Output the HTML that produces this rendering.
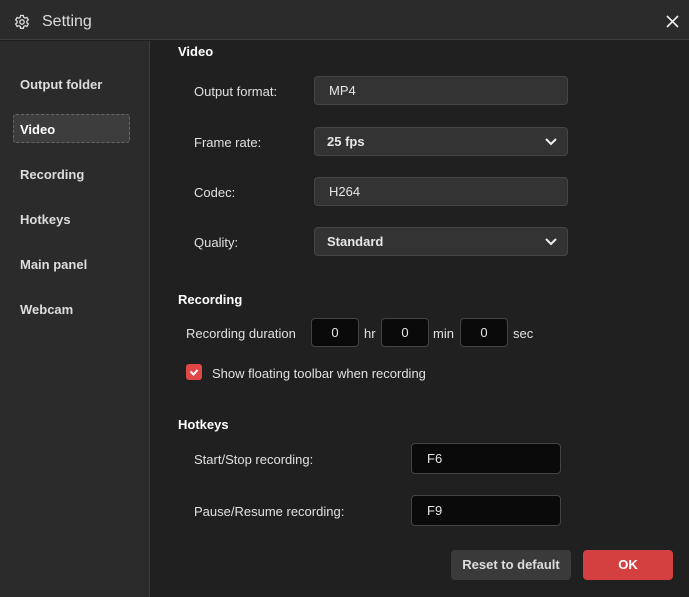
<!DOCTYPE html><html><head><style>
*{margin:0;padding:0;box-sizing:border-box}
body{width:689px;height:597px;background:#202020;font-family:"Liberation Sans",sans-serif;color:#e6e6e6;position:relative;overflow:hidden;font-size:13px}
.a{position:absolute}
.title{left:0;top:0;width:689px;height:40px;background:#2b2b2b;border-bottom:1px solid #3c3c3c}
.side{left:0;top:41px;width:150px;height:556px;background:#2b2b2b;border-right:1px solid #3c3c3c}
.nav{left:20px;font-weight:bold;font-size:13px;color:#ddd}
.h{font-weight:bold;font-size:13px;color:#fff}
.lab{font-size:13px;color:#e0e0e0}
.inp{left:314px;width:254px;height:29px;background:#333;border:1px solid #454545;border-radius:4px;padding-left:14px;line-height:27px;font-size:13px}
.sel{font-weight:bold;padding-left:12px}
.chev{position:absolute;right:10px;top:9px}
.num{height:29px;background:#0a0a0b;border:1px solid #444;border-radius:4px;text-align:center;line-height:27px;top:318px}
.hk{left:411px;width:150px;height:31px;background:#0a0a0b;border:1px solid #444;border-radius:4px;padding-left:15px;line-height:29px}
</style></head><body>
<div class="a" style="left:0;top:0;width:689px;height:2px;background:#111"></div>
<div class="a title">
<svg class="a" style="left:14px;top:14px" width="16" height="16" viewBox="0 0 16 16" fill="none" stroke="#ddd" stroke-width="1.3"><path d="M6.6 1.5h2.8l.4 1.9 1.3.7 1.8-.7 1.4 2.4-1.4 1.3v1.6l1.4 1.3-1.4 2.4-1.8-.7-1.3.7-.4 1.9H6.6l-.4-1.9-1.3-.7-1.8.7-1.4-2.4 1.4-1.3V7.2L1.7 5.9l1.4-2.4 1.8.7 1.3-.7z"/><circle cx="8" cy="8" r="2.2"/></svg>
<div class="a" style="left:42px;top:13px;font-size:16px;color:#ddd">Setting</div>
<svg class="a" style="left:666px;top:15px" width="13" height="13" viewBox="0 0 13 13" stroke="#eee" stroke-width="1.6"><path d="M1 1l11 11M12 1L1 12"/></svg>
</div>
<div class="a side"></div>
<div class="a nav" style="top:77px">Output folder</div>
<div class="a" style="left:13px;top:114px;width:117px;height:29px;background:#3d3d3d;border:1px dashed #666;border-radius:3px"></div>
<div class="a nav" style="top:122px;color:#fff">Video</div>
<div class="a nav" style="top:167px">Recording</div>
<div class="a nav" style="top:212px">Hotkeys</div>
<div class="a nav" style="top:257px">Main panel</div>
<div class="a nav" style="top:302px">Webcam</div>

<div class="a h" style="left:178px;top:44px">Video</div>
<div class="a lab" style="left:194px;top:84px">Output format:</div>
<div class="a inp" style="top:76px">MP4</div>
<div class="a lab" style="left:194px;top:135px">Frame rate:</div>
<div class="a inp sel" style="top:127px">25 fps<svg class="chev" width="12" height="9" viewBox="0 0 12 9" fill="none" stroke="#eee" stroke-width="2"><path d="M1 2l5 5 5-5"/></svg></div>
<div class="a lab" style="left:194px;top:185px">Codec:</div>
<div class="a inp" style="top:177px">H264</div>
<div class="a lab" style="left:194px;top:235px">Quality:</div>
<div class="a inp sel" style="top:227px">Standard<svg class="chev" width="12" height="9" viewBox="0 0 12 9" fill="none" stroke="#eee" stroke-width="2"><path d="M1 2l5 5 5-5"/></svg></div>

<div class="a h" style="left:178px;top:292px">Recording</div>
<div class="a lab" style="left:186px;top:326px">Recording duration</div>
<div class="a num" style="left:311px;width:48px">0</div>
<div class="a lab" style="left:364px;top:326px">hr</div>
<div class="a num" style="left:381px;width:48px">0</div>
<div class="a lab" style="left:433px;top:326px">min</div>
<div class="a num" style="left:460px;width:48px">0</div>
<div class="a lab" style="left:513px;top:326px">sec</div>
<div class="a" style="left:186px;top:364px;width:16px;height:16px;background:#e04848;border-radius:3px"><svg width="16" height="16" viewBox="0 0 16 16" fill="none" stroke="#fff" stroke-width="2"><path d="M4.5 7.5l3 3 4-4.5"/></svg></div>
<div class="a lab" style="left:212px;top:366px">Show floating toolbar when recording</div>

<div class="a h" style="left:178px;top:417px">Hotkeys</div>
<div class="a lab" style="left:194px;top:452px">Start/Stop recording:</div>
<div class="a hk" style="top:443px">F6</div>
<div class="a lab" style="left:194px;top:504px">Pause/Resume recording:</div>
<div class="a hk" style="top:495px">F9</div>

<div class="a" style="left:451px;top:550px;width:120px;height:30px;background:#3a3a3a;border-radius:4px;text-align:center;line-height:30px;font-weight:bold;color:#ddd">Reset to default</div>
<div class="a" style="left:583px;top:550px;width:90px;height:30px;background:#d43f3f;border-radius:4px;text-align:center;line-height:30px;font-weight:bold;color:#fff">OK</div>
</body></html>
